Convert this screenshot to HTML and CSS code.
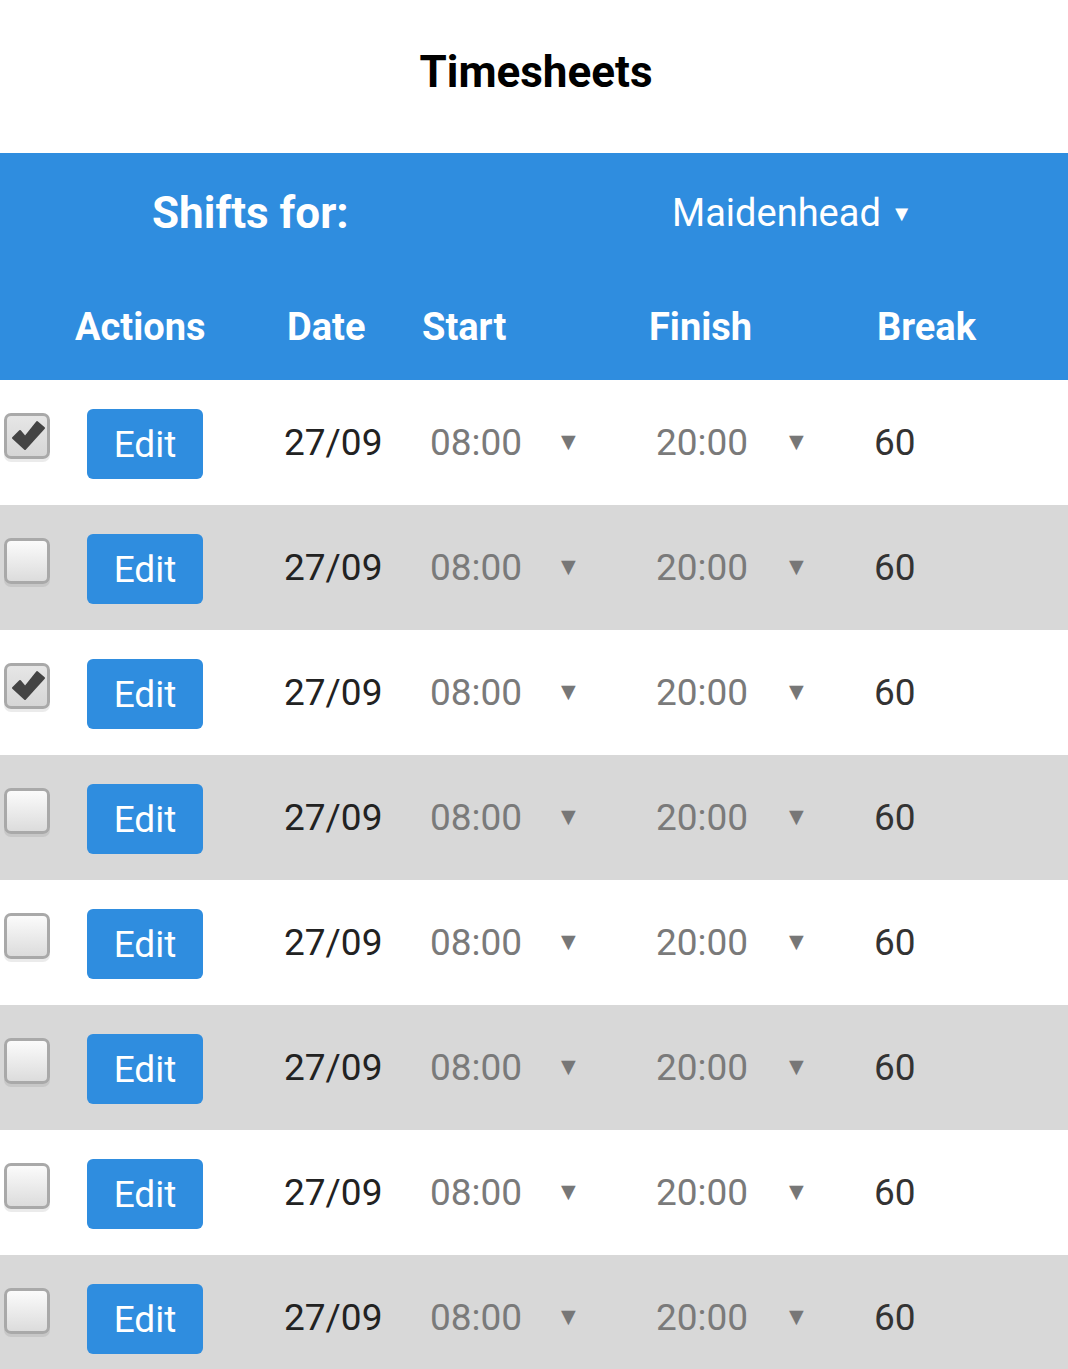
FILE: index.html
```html
<!DOCTYPE html>
<html>
<head>
<meta charset="utf-8">
<link rel="stylesheet" href="styles.css">
</head>
<body>
<h1 class="title">Timesheets</h1>
<section class="panel">
  <div class="shifts-for">
    <span class="shifts-label">Shifts for:</span>
    <span class="location">Maidenhead <span class="loc-arrow">▼</span></span>
  </div>
  <div class="col-heads">
    <span>Actions</span>
    <span>Date</span>
    <span>Start</span>
    <span>Finish</span>
    <span>Break</span>
  </div>
</section>
<div class="rows">
  <div class="row"><span class="cb checked"><svg viewBox="0 0 46 46" width="46" height="46"><path d="M9 25 L16 18 L21 24 L33 9 L40 15 L21 36 Z" fill="#444" stroke="#444" stroke-width="2" stroke-linejoin="round"/></svg></span><button class="edit">Edit</button><span class="date">27/09</span><span class="time">08:00</span><span class="arrow">▼</span><span class="time">20:00</span><span class="arrow">▼</span><span class="brk">60</span></div>
  <div class="row alt"><span class="cb"></span><button class="edit">Edit</button><span class="date">27/09</span><span class="time">08:00</span><span class="arrow">▼</span><span class="time">20:00</span><span class="arrow">▼</span><span class="brk">60</span></div>
  <div class="row"><span class="cb checked"><svg viewBox="0 0 46 46" width="46" height="46"><path d="M9 25 L16 18 L21 24 L33 9 L40 15 L21 36 Z" fill="#444" stroke="#444" stroke-width="2" stroke-linejoin="round"/></svg></span><button class="edit">Edit</button><span class="date">27/09</span><span class="time">08:00</span><span class="arrow">▼</span><span class="time">20:00</span><span class="arrow">▼</span><span class="brk">60</span></div>
  <div class="row alt"><span class="cb"></span><button class="edit">Edit</button><span class="date">27/09</span><span class="time">08:00</span><span class="arrow">▼</span><span class="time">20:00</span><span class="arrow">▼</span><span class="brk">60</span></div>
  <div class="row"><span class="cb"></span><button class="edit">Edit</button><span class="date">27/09</span><span class="time">08:00</span><span class="arrow">▼</span><span class="time">20:00</span><span class="arrow">▼</span><span class="brk">60</span></div>
  <div class="row alt"><span class="cb"></span><button class="edit">Edit</button><span class="date">27/09</span><span class="time">08:00</span><span class="arrow">▼</span><span class="time">20:00</span><span class="arrow">▼</span><span class="brk">60</span></div>
  <div class="row"><span class="cb"></span><button class="edit">Edit</button><span class="date">27/09</span><span class="time">08:00</span><span class="arrow">▼</span><span class="time">20:00</span><span class="arrow">▼</span><span class="brk">60</span></div>
  <div class="row alt"><span class="cb"></span><button class="edit">Edit</button><span class="date">27/09</span><span class="time">08:00</span><span class="arrow">▼</span><span class="time">20:00</span><span class="arrow">▼</span><span class="brk">60</span></div>
</div>
</body>
</html>
```
FILE: styles.css
```css
html, body {
  margin: 0;
  padding: 0;
  background: #fff;
  font-family: Roboto, "Liberation Sans", sans-serif;
  overflow: hidden;
}
.title {
  margin: 0;
  height: 153px;
  display: flex;
  align-items: center;
  justify-content: center;
  font-size: 44px;
  font-weight: 700;
  color: #000;
  padding-left: 4px;
  box-sizing: border-box;
  padding-bottom: 10px;
}
.panel {
  background: #2f8ddf;
  color: #fff;
  height: 227px;
  display: flex;
  flex-direction: column;
}
.shifts-for {
  height: 120px;
  display: grid;
  grid-template-columns: 672px 1fr;
  align-items: center;
}
.shifts-label {
  font-size: 44px;
  font-weight: 700;
  padding-left: 152px;
}
.location {
  font-size: 38px;
  display: flex;
  align-items: center;
}
.loc-arrow {
  font-size: 22px;
  margin-left: 10px;
  margin-top: 2px;
}
.col-heads {
  flex: 1;
  display: grid;
  grid-template-columns: 212px 135px 227px 228px auto;
  padding-left: 75px;
  align-items: center;
  font-size: 38px;
  font-weight: 700;
  padding-bottom: 0;
}
.row {
  height: 125px;
  display: grid;
  grid-template-columns: 87px 197px 146px 126px 100px 128px 90px 1fr;
  align-items: center;
  background: #fff;
}
.row.alt {
  background: #d8d8d8;
}
.cb {
  width: 46px;
  height: 46px;
  box-sizing: border-box;
  margin-left: 4px;
  margin-bottom: 14px;
  border: 3px solid #a9a9a9;
  border-radius: 7px;
  background: linear-gradient(#fbfbfb, #dcdcdc);
  box-shadow: 0 3px 0 rgba(0,0,0,0.08);
  position: relative;
  overflow: hidden;
}
.cb.checked {
  background: linear-gradient(#e6e6e6, #d6d6d6);
}
.cb svg {
  position: absolute;
  left: -3px;
  top: -3px;
}
.edit {
  width: 116px;
  height: 70px;
  border: none;
  border-radius: 6px;
  background: #2f8ddf;
  color: #fff;
  font-family: Roboto, "Liberation Sans", sans-serif;
  font-size: 37px;
  padding: 0;
  margin-top: 3px;
}
.date {
  font-size: 37px;
  color: #222;
}
.time {
  font-size: 37px;
  color: #7a7a7a;
}
.arrow {
  font-size: 25px;
  color: #777;
  margin-bottom: 2px;
}
.brk {
  font-size: 37px;
  color: #333;
}
```
